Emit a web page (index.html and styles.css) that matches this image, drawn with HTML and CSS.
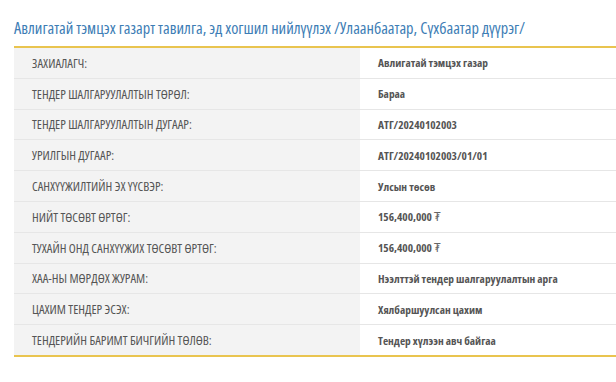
FILE: index.html
```html
<!DOCTYPE html>
<html>
<head>
<meta charset="utf-8">
<link rel="stylesheet" href="styles.css">
</head>
<body>
<div class="page">
  <h2 class="title">Авлигатай тэмцэх газарт тавилга, эд хогшил нийлүүлэх /Улаанбаатар, Сүхбаатар дүүрэг/</h2>
  <table class="info">
    <tr><td class="k">ЗАХИАЛАГЧ:</td><td class="v">Авлигатай тэмцэх газар</td></tr>
    <tr><td class="k">ТЕНДЕР ШАЛГАРУУЛАЛТЫН ТӨРӨЛ:</td><td class="v">Бараа</td></tr>
    <tr><td class="k">ТЕНДЕР ШАЛГАРУУЛАЛТЫН ДУГААР:</td><td class="v">АТГ/20240102003</td></tr>
    <tr><td class="k">УРИЛГЫН ДУГААР:</td><td class="v">АТГ/20240102003/01/01</td></tr>
    <tr><td class="k">САНХҮҮЖИЛТИЙН ЭХ ҮҮСВЭР:</td><td class="v">Улсын төсөв</td></tr>
    <tr><td class="k">НИЙТ ТӨСӨВТ ӨРТӨГ:</td><td class="v">156,400,000 <span class="cur">₮</span></td></tr>
    <tr><td class="k">ТУХАЙН ОНД САНХҮҮЖИХ ТӨСӨВТ ӨРТӨГ:</td><td class="v">156,400,000 <span class="cur">₮</span></td></tr>
    <tr><td class="k">ХАА-НЫ МӨРДӨХ ЖУРАМ:</td><td class="v">Нээлттэй тендер шалгаруулалтын арга</td></tr>
    <tr><td class="k">ЦАХИМ ТЕНДЕР ЭСЭХ:</td><td class="v">Хялбаршуулсан цахим</td></tr>
    <tr><td class="k">ТЕНДЕРИЙН БАРИМТ БИЧГИЙН ТӨЛӨВ:</td><td class="v">Тендер хүлээн авч байгаа</td></tr>
  </table>
</div>
</body>
</html>
```
FILE: styles.css
```css
html, body {
  margin: 0;
  padding: 0;
  background: #fff;
}
.page {
  padding: 18px 0 0 14px;
  font-family: "Open Sans", "DejaVu Sans", sans-serif;
  font-stretch: 75%;
}
.title {
  margin: 0 0 8px 0;
  font-size: 16.3px;
  font-weight: 400;
  line-height: 20px;
  color: #3d7db5;
}
.info {
  width: 602px;
  border-collapse: collapse;
  border-top: 2px solid #e9c44f;
  border-bottom: 2px solid #e9c44f;
}
.info td {
  height: 29.8px;
  padding: 0;
  border-bottom: 1px solid #e6e6e6;
  color: #555;
}
.info tr:last-child td {
  border-bottom: none;
}
.k {
  width: 328px;
  background: #f3f3f3;
  padding-left: 18px !important;
  font-size: 12.8px;
  text-transform: uppercase;
}
.v {
  padding-left: 18px !important;
  font-size: 11.4px;
  font-weight: 700;
  color: #4a4a4a;
}
.cur {
  font-weight: 400;
  color: #666;
}
```
